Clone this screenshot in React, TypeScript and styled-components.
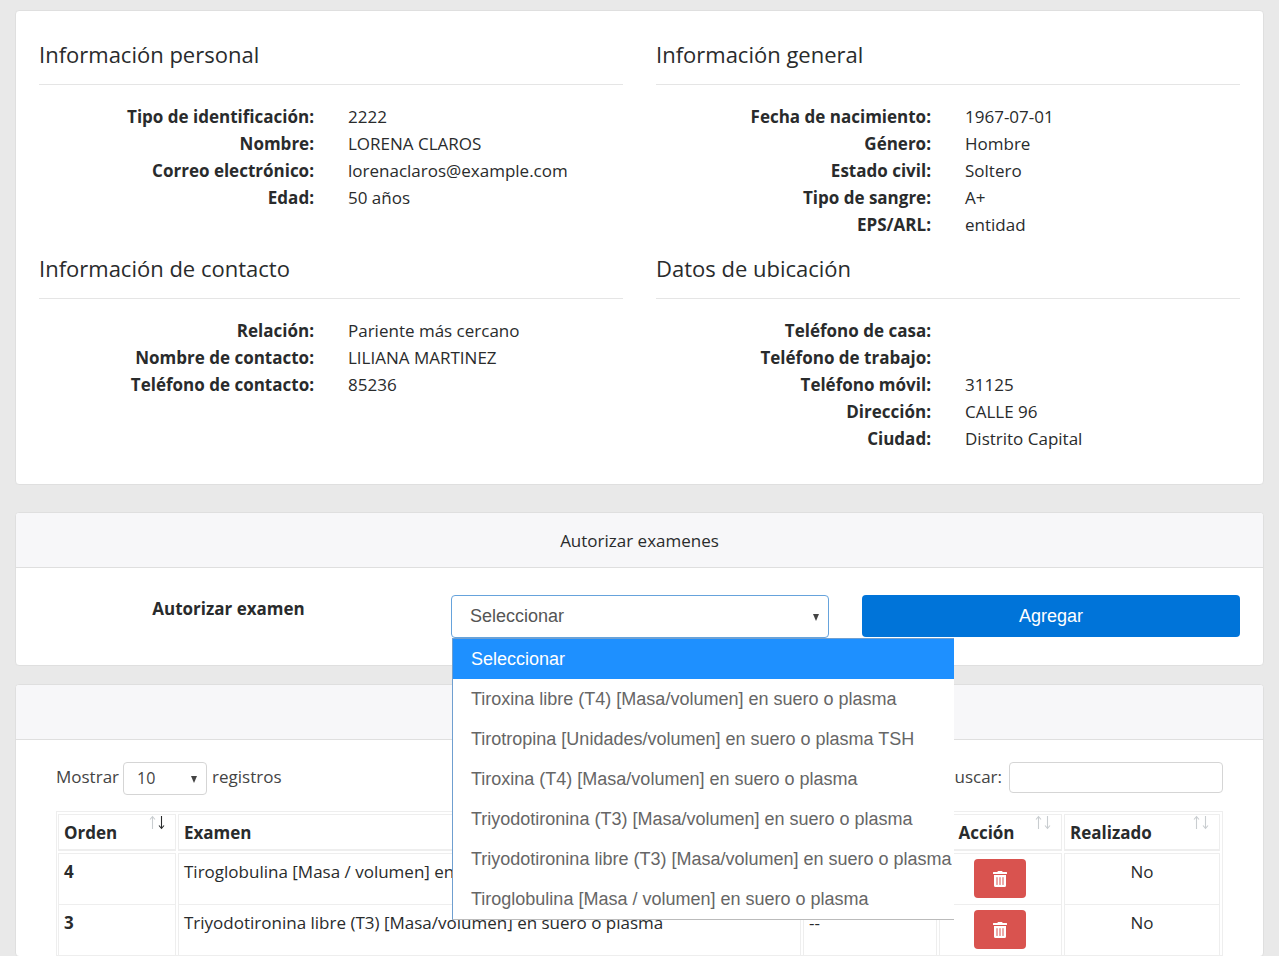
import React from "react";
import styled, { createGlobalStyle } from "styled-components";
import { FaTrashAlt } from "react-icons/fa";

const Global = createGlobalStyle`
  html, body { margin: 0; height: 956px; overflow: hidden; background: #e9e9e9; }
  body { font-family: "Open Sans", "Noto Sans", sans-serif; font-size: 17px; color: #292b2c; }
  * { box-sizing: border-box; }
`;

const Page = styled.div`
  padding: 10px 15px 0;
  display: flex;
  flex-direction: column;
`;

const Card = styled.section<{ $gap?: number }>`
  background: #fff;
  border: 1px solid #dfdfdf;
  border-radius: 4px;
  margin-top: ${(p) => p.$gap ?? 0}px;
`;

const InfoGrid = styled.div`
  display: grid;
  grid-template-columns: 584px 584px;
  column-gap: 33px;
  row-gap: 17px;
  padding: 30px 23px 32px;
`;

const SectionTitle = styled.h2`
  margin: 0;
  font-size: 22px;
  font-weight: 400;
  line-height: 27px;
  padding-bottom: 16px;
  border-bottom: 1px solid #e5e5e5;
  margin-bottom: 18px;
`;

const InfoRow = styled.div`
  display: grid;
  grid-template-columns: 275px 1fr;
  column-gap: 34px;
  line-height: 27px;
  height: 27px;
`;

const InfoLabel = styled.div`
  text-align: right;
  font-weight: 700;
  white-space: nowrap;
`;

const InfoValue = styled.div`
  white-space: nowrap;
`;

const CardHeader = styled.div`
  height: 55px;
  background: #f7f7f9;
  border-bottom: 1px solid #dfdfdf;
  border-radius: 3px 3px 0 0;
  display: flex;
  align-items: center;
  justify-content: center;
`;

const AuthBody = styled.div`
  display: grid;
  grid-template-columns: 379px 378px 378px;
  column-gap: 33px;
  padding: 27px 23px 27px;
  height: 97px;
`;

const AuthLabel = styled.label`
  font-weight: 700;
  text-align: center;
  line-height: 27px;
`;

const SelectWrap = styled.div`
  position: relative;
  height: 43px;
`;

const SelectBox = styled.div`
  height: 43px;
  border: 1px solid #66a3dc;
  border-radius: 4px;
  padding-left: 18px;
  display: flex;
  align-items: center;
  font: 18px "Liberation Sans", Arial, sans-serif;
  color: #555;
  position: relative;
`;

const Caret = styled.span<{ $right: number }>`
  position: absolute;
  right: ${(p) => p.$right}px;
  top: 50%;
  margin-top: -3px;
  width: 0;
  height: 0;
  border-left: 3.5px solid transparent;
  border-right: 3.5px solid transparent;
  border-top: 7px solid #444;
`;

const Dropdown = styled.ul`
  position: absolute;
  z-index: 10;
  top: 43px;
  left: 1px;
  width: 502px;
  margin: 0;
  padding: 0;
  list-style: none;
  background: #fff;
  border-top: 1px solid #6f9fd0;
  border-left: 1px solid #6f9fd0;
  border-bottom: 1px solid #bbb;
  font: 18px "Liberation Sans", Arial, sans-serif;
`;

const Option = styled.li<{ $active?: boolean }>`
  height: 40px;
  line-height: 40px;
  padding-left: 18px;
  white-space: nowrap;
  color: ${(p) => (p.$active ? "#fff" : "#666")};
  background: ${(p) => (p.$active ? "#1e90ff" : "#fff")};
`;

const PrimaryButton = styled.button`
  height: 42px;
  border: 0;
  border-radius: 4px;
  background: #0074d9;
  color: #fff;
  font: 18px "Liberation Sans", Arial, sans-serif;
`;

const ListBody = styled.div`
  padding: 22px 40px 0;
`;

const Toolbar = styled.div`
  display: flex;
  justify-content: space-between;
  align-items: flex-start;
  height: 49px;
  color: #444;
`;

const LengthGroup = styled.div`
  display: flex;
  align-items: flex-start;
  gap: 5px;
  line-height: 29px;
`;

const LengthSelect = styled.div`
  width: 84px;
  height: 33px;
  margin-left: -1px;
  border: 1px solid #d5d5d5;
  border-radius: 4px;
  padding-left: 13px;
  display: flex;
  align-items: center;
  position: relative;
  font-size: 16px;
`;

const SearchGroup = styled.div`
  display: flex;
  align-items: flex-start;
  gap: 7px;
  line-height: 29px;
`;

const SearchInput = styled.input`
  width: 214px;
  height: 31px;
  border: 1px solid #d5d5d5;
  border-radius: 4px;
  background: #fff;
`;

const TableFrame = styled.div`
  border: 1px solid #eee;
  padding-top: 2px;
`;

const Table = styled.table`
  border-collapse: separate;
  border-spacing: 2px 0;
  table-layout: fixed;
  width: 1166px;
  margin-left: -1px;
  thead::after { content: ""; display: table-row; height: 2px; }
`;

const Th = styled.th<{ $center?: boolean }>`
  position: relative;
  height: 37px;
  border: 1px solid #eee;
  border-bottom-width: 2px;
  padding: 0 ${(p) => (p.$center ? 33 : 5)}px 0 5px;
  text-align: ${(p) => (p.$center ? "center" : "left")};
  font-weight: 700;
  vertical-align: bottom;
  line-height: 33px;
`;

const SortGlyph = styled.svg`
  position: absolute;
  top: 0;
  right: 9px;
`;

const Td = styled.td<{ $center?: boolean; $bold?: boolean }>`
  height: 51px;
  border: 1px solid #eee;
  border-bottom: 0;
  padding: 4px 5px 0;
  vertical-align: top;
  line-height: 27px;
  white-space: nowrap;
  overflow: hidden;
  text-align: ${(p) => (p.$center ? "center" : "left")};
  font-weight: ${(p) => (p.$bold ? 700 : 400)};
`;

const DeleteButton = styled.button`
  width: 52px;
  height: 39px;
  margin: 1px 1px 0 0;
  border: 0;
  border-radius: 4px;
  background: #d9534f;
  color: #fff;
  font-size: 16px;
  display: inline-flex;
  align-items: center;
  justify-content: center;
`;

const options = [
  "Seleccionar",
  "Tiroxina libre (T4) [Masa/volumen] en suero o plasma",
  "Tirotropina [Unidades/volumen] en suero o plasma TSH",
  "Tiroxina (T4) [Masa/volumen] en suero o plasma",
  "Triyodotironina (T3) [Masa/volumen] en suero o plasma",
  "Triyodotironina libre (T3) [Masa/volumen] en suero o plasma",
  "Tiroglobulina [Masa / volumen] en suero o plasma",
];

const sections: { title: string; rows: [string, string][] }[] = [
  {
    title: "Información personal",
    rows: [
      ["Tipo de identificación:", "2222"],
      ["Nombre:", "LORENA CLAROS"],
      ["Correo electrónico:", "lorenaclaros@example.com"],
      ["Edad:", "50 años"],
    ],
  },
  {
    title: "Información general",
    rows: [
      ["Fecha de nacimiento:", "1967-07-01"],
      ["Género:", "Hombre"],
      ["Estado civil:", "Soltero"],
      ["Tipo de sangre:", "A+"],
      ["EPS/ARL:", "entidad"],
    ],
  },
  {
    title: "Información de contacto",
    rows: [
      ["Relación:", "Pariente más cercano"],
      ["Nombre de contacto:", "LILIANA MARTINEZ"],
      ["Teléfono de contacto:", "85236"],
    ],
  },
  {
    title: "Datos de ubicación",
    rows: [
      ["Teléfono de casa:", ""],
      ["Teléfono de trabajo:", ""],
      ["Teléfono móvil:", "31125"],
      ["Dirección:", "CALLE 96"],
      ["Ciudad:", "Distrito Capital"],
    ],
  },
];

const Sort = ({ dark }: { dark?: boolean }) => (
  <SortGlyph width="17" height="15" viewBox="0 0 17 15" fill="none" strokeWidth="1.1">
    <path d="M3.5 14V1.5M1 4.5L3.5 1.5L6 4.5" stroke="#c9cdd0" />
    <path d="M12.5 1V13.5M10 10.5L12.5 13.5L15 10.5" stroke={dark ? "#292b2c" : "#c9cdd0"} />
  </SortGlyph>
);

const exams = [
  { order: "4", name: "Tiroglobulina [Masa / volumen] en suero o plasma" },
  { order: "3", name: "Triyodotironina libre (T3) [Masa/volumen] en suero o plasma" },
];

export default function App() {
  return (
    <Page>
      <Global />
      <Card>
        <InfoGrid>
          {sections.map((s) => (
            <div key={s.title}>
              <SectionTitle>{s.title}</SectionTitle>
              {s.rows.map(([k, v]) => (
                <InfoRow key={k}>
                  <InfoLabel>{k}</InfoLabel>
                  <InfoValue>{v}</InfoValue>
                </InfoRow>
              ))}
            </div>
          ))}
        </InfoGrid>
      </Card>

      <Card $gap={27}>
        <CardHeader>Autorizar examenes</CardHeader>
        <AuthBody>
          <AuthLabel>Autorizar examen</AuthLabel>
          <SelectWrap>
            <SelectBox>
              Seleccionar
              <Caret $right={9} />
            </SelectBox>
            <Dropdown>
              {options.map((o, i) => (
                <Option key={o} $active={i === 0}>
                  {o}
                </Option>
              ))}
            </Dropdown>
          </SelectWrap>
          <PrimaryButton>Agregar</PrimaryButton>
        </AuthBody>
      </Card>

      <Card $gap={18}>
        <CardHeader>Examenes autorizados</CardHeader>
        <ListBody>
          <Toolbar>
            <LengthGroup>
              Mostrar
              <LengthSelect>
                10
                <Caret $right={9} />
              </LengthSelect>
              registros
            </LengthGroup>
            <SearchGroup>
              Buscar:
              <SearchInput />
            </SearchGroup>
          </Toolbar>
          <TableFrame>
            <Table>
              <colgroup>
                <col style={{ width: 118 }} />
                <col style={{ width: 623 }} />
                <col style={{ width: 134 }} />
                <col style={{ width: 123 }} />
                <col />
              </colgroup>
              <thead>
                <tr>
                  <Th>
                    Orden
                    <Sort dark />
                  </Th>
                  <Th>Examen</Th>
                  <Th>Resultado</Th>
                  <Th $center>
                    Acción
                    <Sort />
                  </Th>
                  <Th>
                    Realizado
                    <Sort />
                  </Th>
                </tr>
              </thead>
              <tbody>
                {exams.map((e) => (
                  <tr key={e.order}>
                    <Td $bold>{e.order}</Td>
                    <Td>{e.name}</Td>
                    <Td>--</Td>
                    <Td $center>
                      <DeleteButton aria-label="Eliminar">
                        <FaTrashAlt />
                      </DeleteButton>
                    </Td>
                    <Td $center>No</Td>
                  </tr>
                ))}
              </tbody>
            </Table>
          </TableFrame>
        </ListBody>
      </Card>
    </Page>
  );
}
